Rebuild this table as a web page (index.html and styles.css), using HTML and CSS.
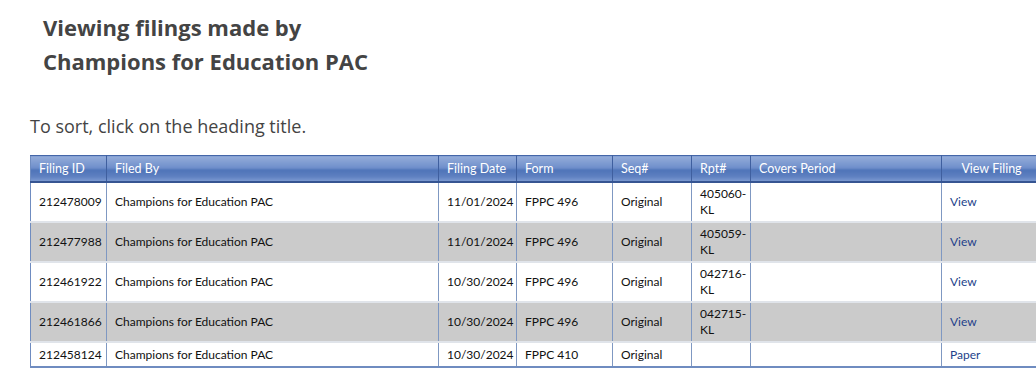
FILE: index.html
```html
<!DOCTYPE html>
<html>
<head>
<meta charset="utf-8">
<link rel="stylesheet" href="styles.css">
</head>
<body>
<div class="page">
  <h2 class="title">Viewing filings made by<br>Champions for Education PAC</h2>
  <p class="hint">To sort, click on the heading title.</p>
  <table class="grid">
    <colgroup>
      <col class="c-id"><col class="c-by"><col class="c-date"><col class="c-form"><col class="c-seq"><col class="c-rpt"><col class="c-period"><col class="c-view">
    </colgroup>
    <thead>
      <tr>
        <th>Filing ID</th><th>Filed By</th><th>Filing Date</th><th>Form</th><th>Seq#</th><th>Rpt#</th><th>Covers Period</th><th class="center">View Filing</th>
      </tr>
    </thead>
    <tbody>
      <tr><td>212478009</td><td>Champions for Education PAC</td><td>11/01/2024</td><td>FPPC 496</td><td>Original</td><td class="rpt">405060-KL</td><td></td><td><a href="#">View</a></td></tr>
      <tr class="alt"><td>212477988</td><td>Champions for Education PAC</td><td>11/01/2024</td><td>FPPC 496</td><td>Original</td><td class="rpt">405059-KL</td><td></td><td><a href="#">View</a></td></tr>
      <tr><td>212461922</td><td>Champions for Education PAC</td><td>10/30/2024</td><td>FPPC 496</td><td>Original</td><td class="rpt">042716-KL</td><td></td><td><a href="#">View</a></td></tr>
      <tr class="alt"><td>212461866</td><td>Champions for Education PAC</td><td>10/30/2024</td><td>FPPC 496</td><td>Original</td><td class="rpt">042715-KL</td><td></td><td><a href="#">View</a></td></tr>
      <tr><td>212458124</td><td>Champions for Education PAC</td><td>10/30/2024</td><td>FPPC 410</td><td>Original</td><td class="rpt"></td><td></td><td><a href="#">Paper</a></td></tr>
    </tbody>
  </table>
</div>
</body>
</html>
```

FILE: styles.css
```css
html { overflow: hidden; }
body {
  margin: 0;
  background: #fff;
  font-family: "Open Sans", "Noto Sans", sans-serif;
  color: #444;
}
.page {
  padding: 10px 0 0 30px;
}
.title {
  margin: 0 0 0 13px;
  font-size: 22px;
  line-height: 34px;
  font-weight: 700;
  color: #444;
}
.hint {
  margin: 36px 0 0 0;
  font-size: 18px;
  line-height: 24px;
  color: #444;
}
.grid {
  margin-top: 17px;
  border-collapse: collapse;
  width: 1011px;
  table-layout: fixed;
  font-family: "Lato", "Noto Sans", sans-serif;
  font-size: 12px;
  border-left: 1px solid #6f8cc0;
  border-bottom: 2px solid #6f8cc0;
}
.c-id { width: 76px; }
.c-by { width: 332px; }
.c-date { width: 78px; }
.c-form { width: 96px; }
.c-seq { width: 79px; }
.c-rpt { width: 59px; }
.c-period { width: 191px; }
.c-view { width: 100px; }
.grid th {
  height: 25px;
  padding: 0 8px;
  text-align: left;
  font-weight: 400;
  font-size: 12.5px;
  color: #fff;
  background: linear-gradient(#94acd9 0%, #6f8fcb 45%, #4f74b8 55%, #5e80c1 80%, #7d9bd1 100%);
  border-top: 1px solid #4466a8;
  border-right: 1px solid #3f5f9f;
  border-bottom: 2px solid #365592;
}
.grid th.center { text-align: center; }
.grid td {
  padding: 3px 6px 3px 8px;
  line-height: 16px;
  color: #111;
  border-right: 1px solid #7f98c2;
  border-bottom: 2px solid #e0e4ea;
  vertical-align: middle;
  white-space: nowrap;
  overflow: hidden;
}
.grid td.rpt {
  white-space: normal;
  padding-right: 2px;
}
.grid tbody tr:last-child td {
  padding-top: 4px;
  padding-bottom: 3px;
  border-bottom: 0;
}
.grid tr.alt td { background: #cbcbcb; }
.grid a {
  color: #233f8a;
  text-decoration: none;
}
```
